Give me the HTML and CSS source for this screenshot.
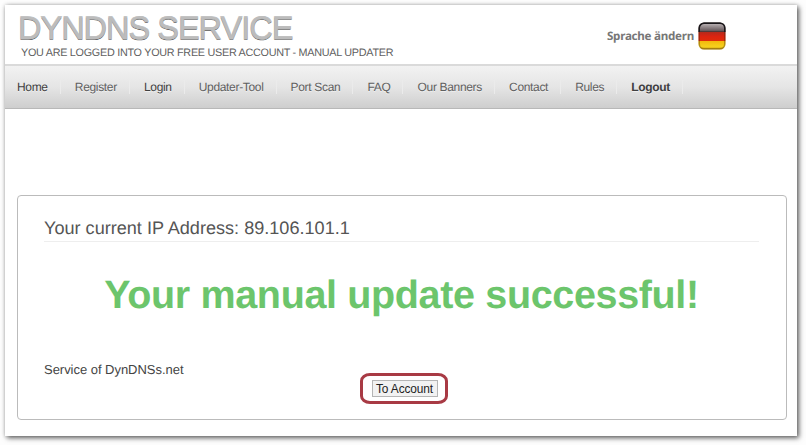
FILE: index.html
```html
<!DOCTYPE html>
<html lang="en">
<head>
<meta charset="utf-8">
<title>DynDNS Service</title>
<link rel="stylesheet" href="styles.css">
</head>
<body>
<div class="page">
  <header class="header">
    <div class="brand">
      <h1 class="title">DYNDNS SERVICE</h1>
      <p class="subtitle">YOU ARE LOGGED INTO YOUR FREE USER ACCOUNT - MANUAL UPDATER</p>
    </div>
    <a class="language">
      <span class="language-text">Sprache ändern</span>
      <svg class="flag" viewBox="0 0 28 28" width="28" height="28">
        <defs>
          <clipPath id="shape"><rect x=".5" y=".5" width="27" height="27" rx="5.5"/></clipPath>
          <linearGradient id="black" x2="0" y2="1"><stop offset="0" stop-color="#1c1a1d"/><stop offset=".2" stop-color="#b5adaf"/><stop offset=".9" stop-color="#64575a"/><stop offset="1" stop-color="#3a1a18"/></linearGradient>
          <linearGradient id="red" x2="0" y2="1"><stop offset="0" stop-color="#b52a1c"/><stop offset=".5" stop-color="#dc2410"/><stop offset="1" stop-color="#e02c0a"/></linearGradient>
          <linearGradient id="gold" x2="0" y2="1"><stop offset="0" stop-color="#f3b80c"/><stop offset=".6" stop-color="#f6d01c"/><stop offset="1" stop-color="#c99a10"/></linearGradient>
        </defs>
        <g clip-path="url(#shape)">
          <rect width="28" height="10" fill="url(#black)"/>
          <rect y="10" width="28" height="9" fill="url(#red)"/>
          <rect y="19" width="28" height="9" fill="url(#gold)"/>
          <rect x=".5" y=".5" width="27" height="27" rx="5.5" fill="none" stroke="#3c2208" stroke-opacity=".35" stroke-width="3"/>
          <path d="M.5 10V6A5.5 5.5 0 0 1 6 .5h16A5.5 5.5 0 0 1 27.500 6v4" fill="none" stroke="#18161a" stroke-width="3"/>
        </g>
      </svg>
    </a>
  </header>
  <nav class="nav">
    <a class="link dark">Home</a>
    <a class="link">Register</a>
    <a class="link dark">Login</a>
    <a class="link">Updater-Tool</a>
    <a class="link">Port Scan</a>
    <a class="link">FAQ</a>
    <a class="link">Our Banners</a>
    <a class="link">Contact</a>
    <a class="link">Rules</a>
    <a class="link current">Logout</a>
  </nav>
  <main class="card">
    <h2 class="address">Your current IP Address: 89.106.101.1</h2>
    <p class="message">Your manual update successful!</p>
    <p class="service">Service of DynDNSs.net</p>
    <div class="action"><button class="button">To Account</button></div>
  </main>
</div>
</body>
</html>
```
FILE: styles.css
```css
* { box-sizing: border-box; }
body {
  margin: 0;
  padding: 5px 9px 9px 5px;
  height: 445px;
  overflow: hidden;
  background: #fdfdfd;
  font-family: "Liberation Sans", Arial, sans-serif;
  text-rendering: geometricPrecision;
}
h1, h2, p { margin: 0; font-weight: normal; white-space: nowrap; }
.page {
  height: 431px;
  background: #fff;
  box-shadow: 2px 2px 5px rgba(0, 0, 0, .6), 0 0 4px rgba(0, 0, 0, .2);
}
.header {
  height: 59px;
  display: flex;
  justify-content: space-between;
  padding: 0 71px 0 13px;
}
.title {
  margin-top: 4px;
  height: 36px;
  line-height: 38px;
  font-size: 32.5px;
  letter-spacing: -1px;
  color: #bcbcbc;
  -webkit-text-stroke: .8px #bcbcbc;
  text-shadow: 0 1.4px 0 #555;
}
.subtitle {
  padding-left: 3px;
  line-height: 16px;
  font-size: 10.8px;
  letter-spacing: -.27px;
  color: #606060;
}
.language {
  display: flex;
  height: 28px;
  margin-top: 17px;
  gap: 4px;
  align-items: center;
}
.language-text {
  font: bold 11.6px "Noto Sans", sans-serif;
  letter-spacing: -.25px;
  color: #777;
}
.nav {
  display: flex;
  height: 45px;
  align-items: center;
  padding: 0 0 0 12px;
  border-top: 2px solid #dadada;
  border-bottom: 1px solid #b8b8b8;
  background: linear-gradient(#f2f2f2, #e5e5e5 50%, #cecece);
}
.link {
  display: block;
  margin-right: 14.1px;
  padding-right: 12px;
  border-right: 1px solid #ebebeb;
  line-height: 14px;
  font-size: 12px;
  letter-spacing: -.33px;
  color: #606060;
  text-shadow: 0 1px 0 #f0f0f0;
}
.dark { color: #404040; }
.current { color: #404040; font-weight: bold; }
.card {
  width: 770px;
  height: 225px;
  margin: 86px 0 0 12px;
  padding: 20px 27px 0 26px;
  border: 1px solid #bbb;
  border-radius: 4px;
}
.address {
  height: 26px;
  line-height: 25px;
  font-size: 18.1px;
  color: #555;
  border-bottom: 1px solid #eee;
}
.message {
  margin-top: 29px;
  line-height: 48px;
  font-size: 39.5px;
  letter-spacing: -.35px;
  font-weight: bold;
  text-align: center;
  color: #6cc56c;
}
.service {
  margin-top: 42px;
  line-height: 18px;
  font-size: 13px;
  letter-spacing: -.03px;
  color: #444;
}
.action {
  display: flex;
  width: 88px;
  height: 31px;
  margin: -6px 0 0 316px;
  padding-left: 1px;
  align-items: center;
  justify-content: center;
  border: 3px solid #a83a44;
  border-radius: 10px / 8px;
}
.button {
  width: 66px;
  height: 17px;
  padding: 0;
  border: 1px solid #b5b5b5;
  background: #f2f2f2;
  font: 11.9px/14px "Liberation Sans", Arial, sans-serif;
  letter-spacing: -.1px;
  color: #222;
  white-space: nowrap;
}
```
